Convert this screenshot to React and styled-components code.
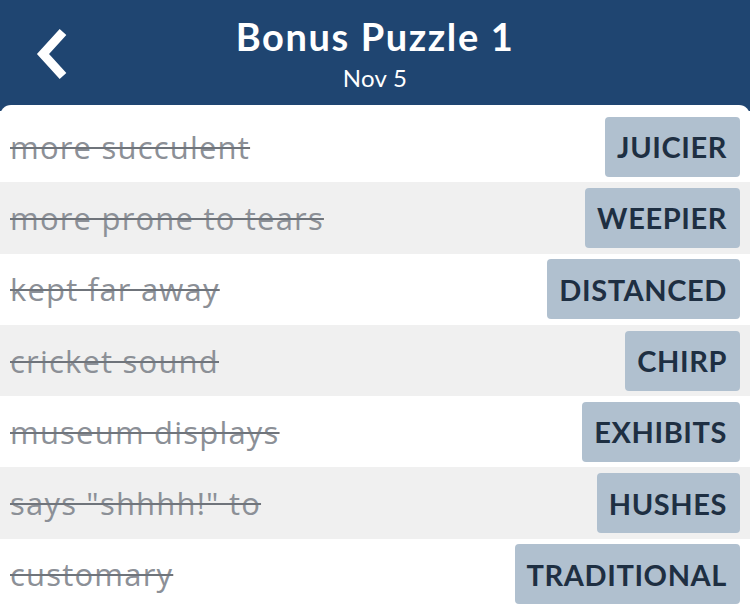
import styled, { createGlobalStyle } from "styled-components";

const GlobalStyle = createGlobalStyle`
  html, body {
    margin: 0;
    padding: 0;
    background: #1f4571;
    font-family: Lato, "Open Sans", sans-serif;
  }
`;

const Page = styled.div`
  width: 750px;
  height: 613px;
  overflow: hidden;
  background: #1f4571;
  display: flex;
  flex-direction: column;
`;

const Header = styled.div`
  height: 105px;
  position: relative;
  display: flex;
  flex-direction: column;
  align-items: center;
  color: #fff;
`;

const BackButton = styled.button`
  position: absolute;
  left: 30px;
  top: 24px;
  width: 48px;
  height: 60px;
  padding: 0;
  border: none;
  background: none;
  cursor: pointer;
`;

const Title = styled.h1`
  margin: 13px 0 0;
  font-size: 38px;
  font-weight: 700;
  line-height: 46px;
  letter-spacing: 1.6px;
`;

const Subtitle = styled.div`
  margin-top: 5px;
  font-size: 24px;
  line-height: 28px;
  letter-spacing: 0.3px;
`;

const Panel = styled.div`
  flex: 1;
  background: #fff;
  border-radius: 11px 11px 0 0;
  padding-top: 6px;
`;

const Row = styled.div`
  height: 71.3px;
  display: flex;
  align-items: center;
  justify-content: space-between;
  padding: 0 10px;
  background: ${p => (p.$shaded ? "#f0f0f0" : "#fff")};
`;

const Clue = styled.span`
  font-family: "Open Sans", Lato, sans-serif;
  font-size: 31px;
  letter-spacing: 1.2px;
  color: #8c9097;
  text-decoration: line-through;
  text-decoration-color: #6f747b;
  text-decoration-thickness: 2px;
`;

const Answer = styled.span`
  height: 60px;
  display: flex;
  align-items: center;
  padding: 0 13px 0 12px;
  background: #b0c0cf;
  border-radius: 4px;
  color: #1e2f42;
  font-size: 29px;
  font-weight: 700;
  letter-spacing: 0.6px;
`;

const clues = [
  ["more succulent", "JUICIER"],
  ["more prone to tears", "WEEPIER"],
  ["kept far away", "DISTANCED"],
  ["cricket sound", "CHIRP"],
  ["museum displays", "EXHIBITS"],
  ['says "shhhh!" to', "HUSHES"],
  ["customary", "TRADITIONAL"],
];

export default function App() {
  return (
    <Page>
      <GlobalStyle />
      <Header>
        <BackButton aria-label="Back">
          <svg width="48" height="60" viewBox="0 0 48 60">
            <path d="M33 8 L13 30 L33 52" fill="none" stroke="#fff" strokeWidth="9" strokeLinecap="butt" strokeLinejoin="miter" />
          </svg>
        </BackButton>
        <Title>Bonus Puzzle 1</Title>
        <Subtitle>Nov 5</Subtitle>
      </Header>
      <Panel>
        {clues.map(([clue, answer], i) => (
          <Row key={clue} $shaded={i % 2 === 1}>
            <Clue>{clue}</Clue>
            <Answer>{answer}</Answer>
          </Row>
        ))}
      </Panel>
    </Page>
  );
}
